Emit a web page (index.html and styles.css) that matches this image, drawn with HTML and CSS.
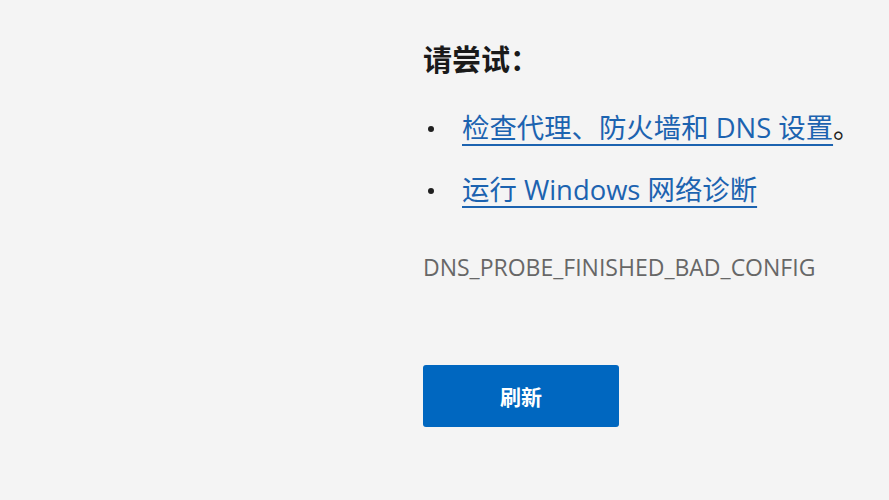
FILE: index.html
```html
<!DOCTYPE html>
<html lang="zh-CN">
<head>
<meta charset="utf-8">
<title>DNS_PROBE_FINISHED_BAD_CONFIG</title>
<link rel="stylesheet" href="styles.css">
</head>
<body>
<main class="content">
  <h2 class="title">请尝试：</h2>
  <ul class="suggestions">
    <li><a href="#" class="link">检查代理、防火墙和 DNS 设置</a>。</li>
    <li><a href="#" class="link">运行 Windows 网络诊断</a></li>
  </ul>
  <div class="code">DNS_PROBE_FINISHED_BAD_CONFIG</div>
  <button class="reload">刷新</button>
</main>
</body>
</html>
```
FILE: styles.css
```css
html, body {
  margin: 0;
  padding: 0;
  background: #f4f4f4;
  height: 100%;
  overflow: hidden;
}
body {
  font-family: "Open Sans", "Noto Sans CJK SC", sans-serif;
  color: #1f1f1f;
}
.content {
  margin-left: 423px;
  padding-top: 40px;
  display: flex;
  flex-direction: column;
  align-items: flex-start;
}
.title {
  margin: 0;
  font-size: 29px;
  line-height: 40px;
  font-weight: 700;
  color: #1a1a1a;
}
.suggestions {
  list-style: none;
  margin: 28px 0 0 0;
  padding: 0;
  display: flex;
  flex-direction: column;
  gap: 22px;
}
.suggestions li {
  position: relative;
  padding-left: 39px;
  font-size: 27.4px;
  line-height: 40px;
  color: #1f1f1f;
}
.suggestions li::before {
  content: "";
  position: absolute;
  left: 5px;
  top: 18px;
  width: 6px;
  height: 6px;
  border-radius: 50%;
  background: #1f1f1f;
}
.link {
  color: #1c63b0;
  text-decoration: underline;
  text-decoration-thickness: 2px;
  text-underline-offset: 6px;
}
.code {
  margin-top: 42px;
  font-size: 23px;
  line-height: 30px;
  color: #676767;
}
.reload {
  margin-top: 83px;
  width: 196px;
  height: 62px;
  border: none;
  border-radius: 3px;
  background: #0067c0;
  color: #ffffff;
  font-family: "Noto Sans CJK SC", sans-serif;
  font-size: 21px;
  font-weight: 700;
  padding: 0;
}
```
